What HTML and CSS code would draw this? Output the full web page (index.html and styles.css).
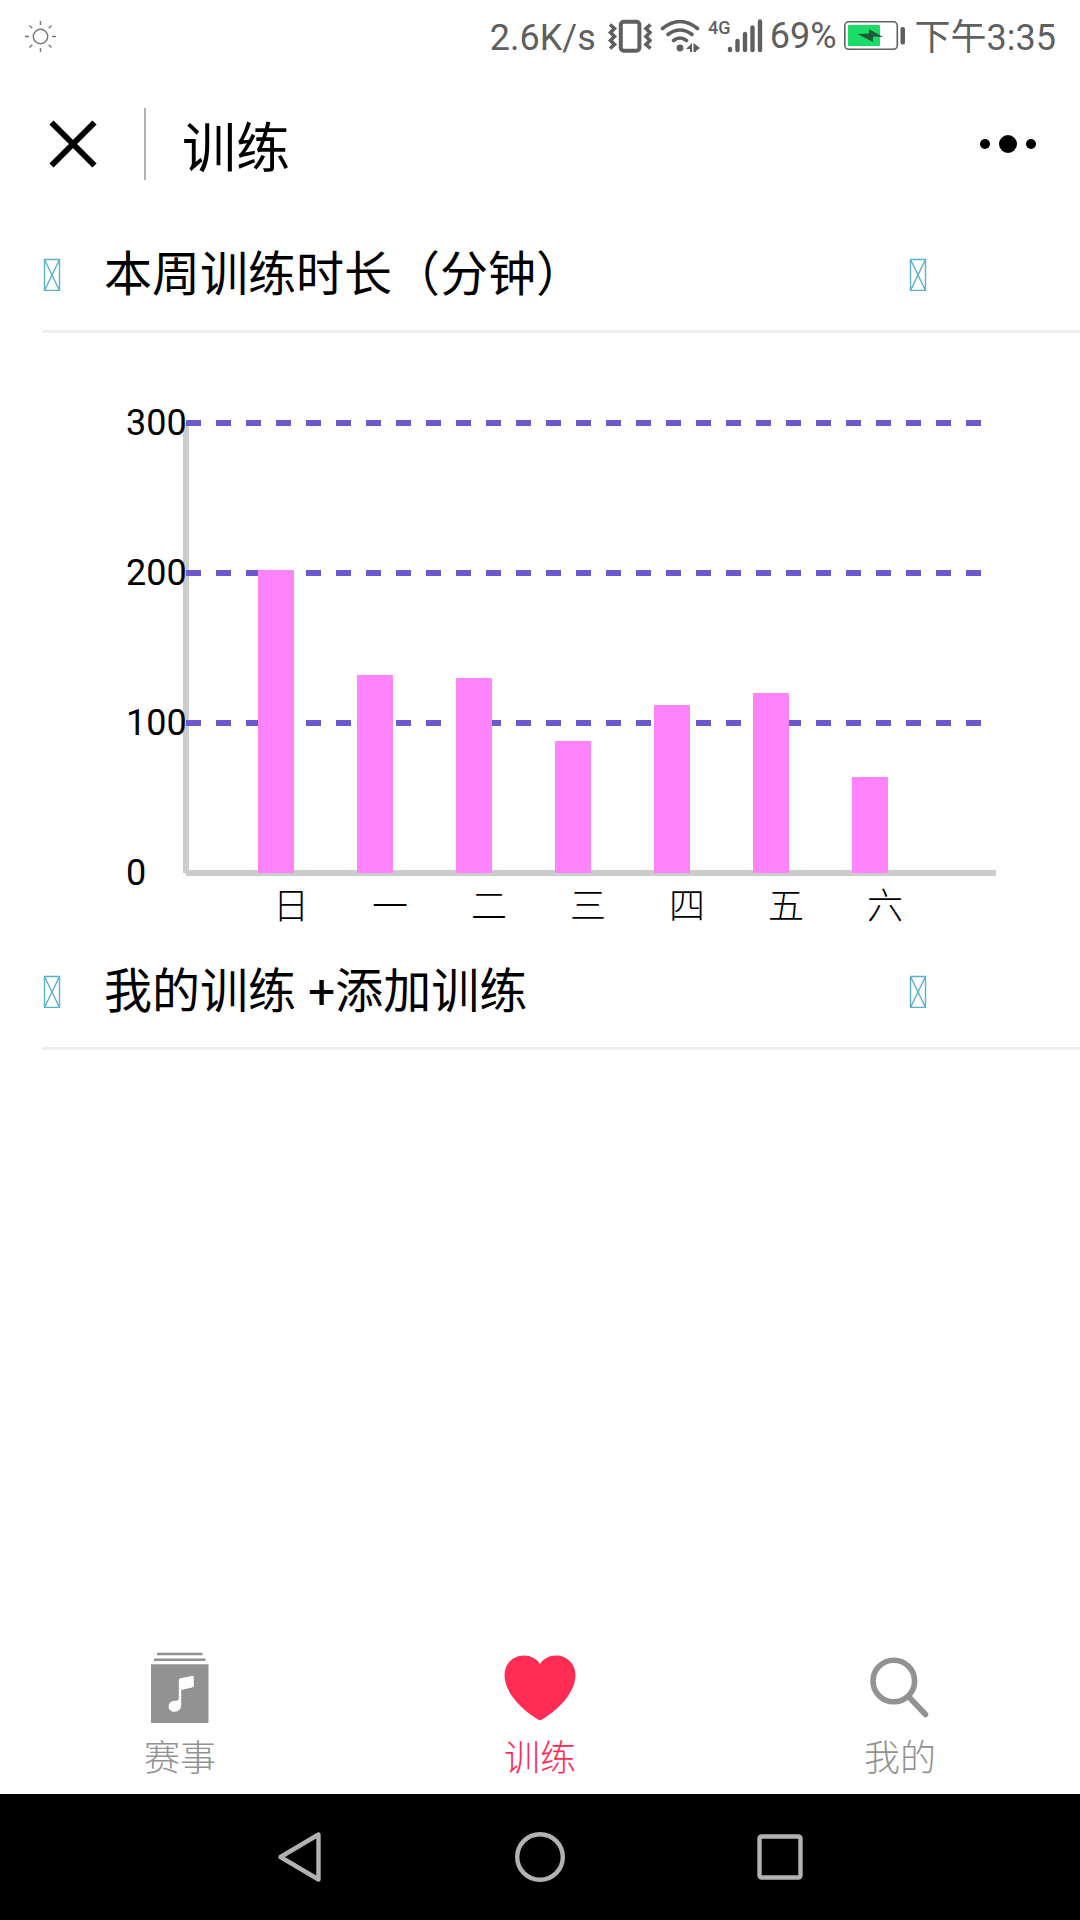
FILE: index.html
```html
<!DOCTYPE html>
<html lang="zh-CN">
<head>
    <meta charset="UTF-8">
    <meta name="viewport" content="width=device-width, initial-scale=1.0">
    <title>训练</title>
    <link rel="stylesheet" href="styles.css">
</head>
<body>

    <div class="status-bar">
        <svg class="sun" width="33" height="33" viewBox="0 0 33 33">
            <circle cx="16.5" cy="16.5" r="7.2"/>
            <path d="M16.5 1v4M16.5 28v4M1 16.5h4M28 16.5h4M5.5 5.5l2.8 2.8M24.7 24.7l2.8 2.8M27.5 5.5l-2.8 2.8M8.3 24.7l-2.8 2.8"/>
        </svg>
        <div class="status-right">
            <span class="status-text">2.6K/s</span>
            <!-- vibrate -->
            <svg width="50" height="36" viewBox="0 0 50 36">
                <rect class="line" x="18.8" y="3.8" width="18.6" height="29" rx="3" stroke-width="4"/>
                <path class="line" stroke-width="3.6" d="M8 6.500l4.500 4-4 4 4 4-4 4 4 4-4.500 4M48.500 6.500l-4.500 4 4 4-4 4 4 4-4 4 4.500 4"/>
            </svg>
            <!-- wifi -->
            <svg width="44" height="36" viewBox="0 0 44 36">
                <path class="line" stroke-width="3.6" stroke-linecap="round" d="M4.500 10.500q17.500-14 35 0M10 16.500q12-9 24 0M15.500 22.500q6.500-5 13 0"/>
                <circle cx="22" cy="30" r="3.4"/>
                <path d="M34 25v9h-2v-3h-4zM35.500 25l6.500 5-4 3v1h-2.500z"/>
            </svg>
            <!-- mobile signal -->
            <svg width="56" height="36" viewBox="0 0 56 36">
                <text class="net" x="0" y="16">4G</text>
                <path class="line" stroke-width="4.400" stroke-linecap="round" d="M22 31v1M29.500 23v9M37 16v16M44.500 9.500V32M52 3.500V32"/>
            </svg>
            <span>69%</span>
            <!-- battery -->
            <svg width="66" height="36" viewBox="0 0 66 36">
                <rect class="line" x="1.800" y="3.800" width="52.500" height="27.500" rx="4" stroke-width="1.600"/>
                <rect x="5" y="7" width="32" height="21" rx="1" fill="#1bdc67"/>
                <path fill="#1c5c36" d="M14.500 16l11.500-.5V11l14 8-10-.5v5.500z"/>
                <rect x="57.500" y="9" width="4.500" height="17.500" rx="2"/>
            </svg>
            <span class="status-text">下午3:35</span>
        </div>
    </div>

    <header class="header">
        <button class="close-btn" aria-label="关闭">
            <svg width="50" height="50" viewBox="0 0 50 50">
                <path d="M3.500 3.500l43 43M46.500 3.500l-43 43"/>
            </svg>
        </button>
        <h1>训练</h1>
        <button class="more-btn" aria-label="更多">
            <svg width="56" height="18" viewBox="0 0 56 18">
                <circle cx="5" cy="9" r="5"/>
                <circle cx="28" cy="9" r="9"/>
                <circle cx="51" cy="9" r="5"/>
            </svg>
        </button>
    </header>

    <main>
        <div class="section-title">
            <svg class="box" width="18" height="36" viewBox="0 0 18 36">
                <path d="M1.500 4.500h15v31h-15zM1.500 4.500l15 31M16.500 4.500l-15 31"/>
            </svg>
            <h2>本周训练时长（分钟）</h2>
            <svg class="box" width="18" height="36" viewBox="0 0 18 36">
                <path d="M1.500 4.500h15v31h-15zM1.500 4.500l15 31M16.500 4.500l-15 31"/>
            </svg>
        </div>

        <svg class="chart" viewBox="0 0 1080 600">
            <path class="axis" d="M186 90v450M186 540h810"/>
            <path class="grid" d="M186 90h810M186 240h810M186 390h810"/>
            <g class="bars">
                <rect x="258" y="237" width="36" height="303"/>
                <rect x="357" y="342" width="36" height="198"/>
                <rect x="456" y="345" width="36" height="195"/>
                <rect x="555" y="408" width="36" height="132"/>
                <rect x="654" y="372" width="36" height="168"/>
                <rect x="753" y="360" width="36" height="180"/>
                <rect x="852" y="444" width="36" height="96"/>
            </g>
            <g class="labels">
                <text x="126" y="102">300</text>
                <text x="126" y="252">200</text>
                <text x="126" y="402">100</text>
                <text x="126" y="552">0</text>
            </g>
            <g class="labels days">
                <text x="273" y="586">日</text>
                <text x="372" y="586">一</text>
                <text x="471" y="586">二</text>
                <text x="570" y="586">三</text>
                <text x="669" y="586">四</text>
                <text x="768" y="586">五</text>
                <text x="867" y="586">六</text>
            </g>
        </svg>

        <div class="section-title">
            <svg class="box" width="18" height="36" viewBox="0 0 18 36">
                <path d="M1.500 4.500h15v31h-15zM1.500 4.500l15 31M16.500 4.500l-15 31"/>
            </svg>
            <h2>我的训练 <a href="#">+添加训练</a></h2>
            <svg class="box" width="18" height="36" viewBox="0 0 18 36">
                <path d="M1.500 4.500h15v31h-15zM1.500 4.500l15 31M16.500 4.500l-15 31"/>
            </svg>
        </div>
    </main>

    <nav class="tab-bar">
        <a href="#" class="tab">
            <svg width="72" height="76" viewBox="0 0 72 76">
                <path d="M13 2.800h45.500v2.400H13zM10 8.500h51.500v2.500H10zM7 14.200h57.500V73H7z"/>
                <path fill="#fff" d="M34.800 30.500q0-1.800 1.800-2.200l11.200-2.400q2-.4 2 1.500v8q0 1.800-1.800 2.200l-10.800 2.300V54c0 5-2.500 7.700-6.500 7.700-3.600 0-6.100-2.200-6.100-5.300 0-3.400 2.700-5.400 6-5.600 2.500-.1 4.200-.3 4.200-2.300z"/>
            </svg>
            <span>赛事</span>
        </a>
        <a href="#" class="tab active">
            <svg width="72" height="76" viewBox="0 0 72 76">
                <path d="M36 14C32.500 8.500 26.500 5.500 20 5.500 9.500 5.500.5 13.500.5 25c0 18 18 35.500 33.500 44.500 1.300.8 2.700.8 4 0C53.500 60.500 71.500 43 71.500 25 71.500 13.500 62.500 5.500 52 5.500 45.500 5.500 39.500 8.500 36 14z"/>
            </svg>
            <span>训练</span>
        </a>
        <a href="#" class="tab">
            <svg width="72" height="76" viewBox="0 0 72 76">
                <circle class="lens" cx="29.800" cy="31" r="20.800"/>
                <path class="lens" d="M45 47L61.500 64.500"/>
            </svg>
            <span>我的</span>
        </a>
    </nav>

    <div class="system-nav">
        <button aria-label="返回">
            <svg width="52" height="52" viewBox="0 0 52 52">
                <path d="M6.500 26L44.500 3.500v45z"/>
            </svg>
        </button>
        <button aria-label="主页">
            <svg width="52" height="52" viewBox="0 0 52 52">
                <circle cx="26" cy="26" r="22.800"/>
            </svg>
        </button>
        <button aria-label="最近">
            <svg width="52" height="52" viewBox="0 0 52 52">
                <rect x="5.500" y="5.500" width="41" height="41" rx="2"/>
            </svg>
        </button>
    </div>

</body>
</html>
```

FILE: styles.css
```css
* {
    box-sizing: border-box;
}

body {
    font-family: Roboto, 'Noto Sans CJK SC', sans-serif;
    font-size: 36px;
    background: #fff;
    color: #000;
    margin: 0;
    min-height: 100vh;
    display: flex;
    flex-direction: column;
}

svg {
    display: block;
    flex: none;
}

button {
    border: none;
    background: none;
    padding: 0;
    cursor: pointer;
}

a {
    color: inherit;
    text-decoration: none;
}

h1, h2 {
    margin: 0;
    font-weight: 400;
}

/* status bar */
.status-bar {
    display: flex;
    align-items: center;
    justify-content: space-between;
    height: 72px;
    padding: 0 24px;
    color: #5f5f5f;
    fill: #5f5f5f;
}

.sun {
    fill: none;
    stroke: #777;
    stroke-width: 1.4;
}

.status-right {
    display: flex;
    align-items: center;
    gap: 6px;
    line-height: 48px;
}

.status-right .line {
    fill: none;
    stroke: #5f5f5f;
}

.status-text {
    padding-top: 4px;
}

.net {
    font-size: 18px;
    font-weight: 500;
}

/* header */
.header {
    display: flex;
    align-items: center;
    height: 144px;
    padding: 0 44px 0 48px;
}

.close-btn {
    height: 72px;
    padding-right: 46px;
    border-right: 2px solid #b2b2b2;
}

.close-btn path {
    stroke: #000;
    stroke-width: 6;
}

.header h1 {
    flex: 1;
    margin-left: 36px;
    padding-top: 12px;
    font-size: 54px;
    line-height: 72px;
}

/* sections */
main {
    flex: 1;
}

.section-title {
    display: flex;
    align-items: center;
    height: 117px;
    margin-left: 42px;
    padding: 0 153px 0 1px;
    border-bottom: 3px solid #efefef;
}

.section-title h2 {
    flex: 1;
    margin-left: 43px;
    padding-top: 4px;
    font-size: 48px;
    line-height: 72px;
}

.box {
    fill: none;
    stroke: #5ab1c8;
    stroke-width: 1.4;
}

/* chart */
.chart {
    width: 100%;
}

.axis {
    stroke: #ccc;
    stroke-width: 6;
}

.grid {
    stroke: #6a5acd;
    stroke-width: 6;
    stroke-dasharray: 15 15;
}

.bars {
    fill: #ff83fa;
}

.labels {
    font-size: 36px;
}

.days {
    font-weight: 300;
}

/* bottom tabs */
.tab-bar {
    display: flex;
    padding-bottom: 16px;
}

.tab {
    flex: 1;
    display: flex;
    flex-direction: column;
    align-items: center;
    gap: 14px;
    color: #929292;
    fill: #929292;
    font-weight: 300;
    line-height: 38px;
}

.tab.active {
    color: #ff2d55;
    fill: #ff2d55;
}

.lens {
    fill: none;
    stroke: #929292;
    stroke-width: 5.6;
    stroke-linecap: round;
}

/* android buttons */
.system-nav {
    display: flex;
    justify-content: center;
    height: 126px;
    background: #000;
}

.system-nav button {
    width: 240px;
}

.system-nav svg {
    margin: 0 auto;
    fill: none;
    stroke: #b2b2b2;
    stroke-width: 4.4;
    stroke-linejoin: round;
}
```
